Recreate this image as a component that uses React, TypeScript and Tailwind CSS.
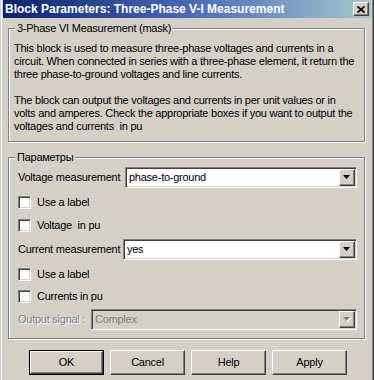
import React from "react";

const raised =
  "border border-t-white border-l-white border-r-[#404040] border-b-[#404040] shadow-[inset_-1px_-1px_0_#808080]";
const sunken =
  "border border-t-[#808080] border-l-[#808080] border-r-white border-b-white shadow-[inset_1px_1px_0_#404040,inset_-1px_-1px_0_#d4d0c8]";

function Arrow({ disabled }: { disabled?: boolean }) {
  return (
    <svg width="8" height="5" viewBox="0 0 8 5" className="block">
      {disabled && <polygon points="1,1 8,1 4.5,5" fill="#ffffff" />}
      <polygon points="0,0 7,0 3.5,4" fill={disabled ? "#808080" : "#000000"} />
    </svg>
  );
}

function Dropdown({ value, disabled }: { value: string; disabled?: boolean }) {
  return (
    <div className={`flex-1 h-[21px] p-[1px] flex ${sunken} ${disabled ? "bg-[#d4d0c8]" : "bg-white"}`}>
      <div className={`flex-1 flex items-center pl-[2px] whitespace-nowrap ${disabled ? "text-[#808080]" : "text-black"}`}>
        {value}
      </div>
      <div className={`w-[16px] h-full bg-[#d4d0c8] flex items-center justify-center ${raised}`}>
        <Arrow disabled={disabled} />
      </div>
    </div>
  );
}

function Check({ label, className }: { label: string; className?: string }) {
  return (
    <div className={`flex items-center h-[13px] gap-[6px] ${className ?? ""}`}>
      <div className={`w-[13px] h-[13px] bg-white ${sunken}`} />
      <span className="whitespace-pre">{label}</span>
    </div>
  );
}

function GroupBox({
  label,
  className,
  children,
}: {
  label: string;
  className?: string;
  children: React.ReactNode;
}) {
  return (
    <div
      className={`relative ml-[5px] mr-[6px] border border-[#808080] shadow-[inset_1px_1px_0_#ffffff,1px_1px_0_#ffffff] ${className ?? ""}`}
    >
      <div className="absolute top-[-7px] left-[6px] px-[2px] bg-[#d4d0c8] leading-[13px] whitespace-nowrap">
        {label}
      </div>
      {children}
    </div>
  );
}

function Button({ label, isDefault }: { label: string; isDefault?: boolean }) {
  if (isDefault) {
    return (
      <div className="w-[75px] h-[25px] border border-black flex">
        <div className={`flex-1 flex items-center justify-center bg-[#d4d0c8] ${raised}`}>{label}</div>
      </div>
    );
  }
  return (
    <div className={`w-[75px] h-[25px] flex items-center justify-center bg-[#d4d0c8] ${raised}`}>{label}</div>
  );
}

export default function App() {
  return (
    <div className="w-[374px] h-[380px] overflow-hidden bg-[#d4d0c8] font-['Liberation_Sans',Arial,sans-serif] text-[11px] leading-[13px] tracking-[-0.25px] text-black flex flex-col px-[3px] shadow-[inset_1px_0_0_#d4d0c8,inset_2px_0_0_#ffffff,inset_-1px_0_0_#404040,inset_-2px_0_0_#808080]">
      {/* Title bar */}
      <div className="h-[18px] shrink-0 flex items-center justify-between pl-[2px] pr-[2px] bg-linear-to-r from-[#0a246a] via-[#4a68b4] to-[#a6c8cc]">
        <span className="text-white font-bold text-[12px] tracking-[0px] whitespace-nowrap">
          Block Parameters: Three-Phase V-I Measurement
        </span>
        <div className={`w-[16px] h-[14px] bg-[#d4d0c8] flex items-center justify-center ${raised}`}>
          <svg width="8" height="7" viewBox="0 0 8 7" className="block">
            <path d="M0.5 0.5 L7.5 6.5 M7.5 0.5 L0.5 6.5" stroke="#000" strokeWidth="1.8" />
          </svg>
        </div>
      </div>

      <GroupBox label="3-Phase VI Measurement (mask)" className="mt-[10px] h-[114px] pt-[13px] pl-[5px]">
        <p className="whitespace-nowrap">
          This block is used to measure three-phase voltages and currents in a
          <br />
          circuit. When connected in series with a three-phase element, it return the
          <br />
          three phase-to-ground voltages and line currents.
        </p>
        <p className="whitespace-nowrap mt-[13px]">
          The block can output the voltages and currents in per unit values or in
          <br />
          volts and amperes. Check the appropriate boxes if you want to output the
          <br />
          voltages and currents&nbsp; in pu
        </p>
      </GroupBox>

      <GroupBox label="Параметры" className="mt-[15px] h-[182px] pt-[9px] pl-[9px] pr-[7px] flex flex-col">
        <div className="flex items-center h-[21px]">
          <span className="w-[107px] whitespace-nowrap">Voltage measurement</span>
          <Dropdown value="phase-to-ground" />
        </div>
        <Check label="Use a label" className="mt-[8px]" />
        <Check label="Voltage  in pu" className="mt-[10px]" />
        <div className="flex items-center h-[21px] mt-[7px]">
          <span className="w-[105px] whitespace-nowrap">Current measurement</span>
          <Dropdown value="yes" />
        </div>
        <Check label="Use a label" className="mt-[8px]" />
        <Check label="Currents in pu" className="mt-[9px]" />
        <div className="flex items-center h-[21px] mt-[6px]">
          <span className="w-[73px] whitespace-nowrap text-[#808080] [text-shadow:1px_1px_0_#ffffff]">
            Output signal :
          </span>
          <Dropdown value="Complex" disabled />
        </div>
      </GroupBox>

      <div className="mt-[11px] flex gap-[6px] pl-[26px]">
        <Button label="OK" isDefault />
        <Button label="Cancel" />
        <Button label="Help" />
        <Button label="Apply" />
      </div>
    </div>
  );
}
